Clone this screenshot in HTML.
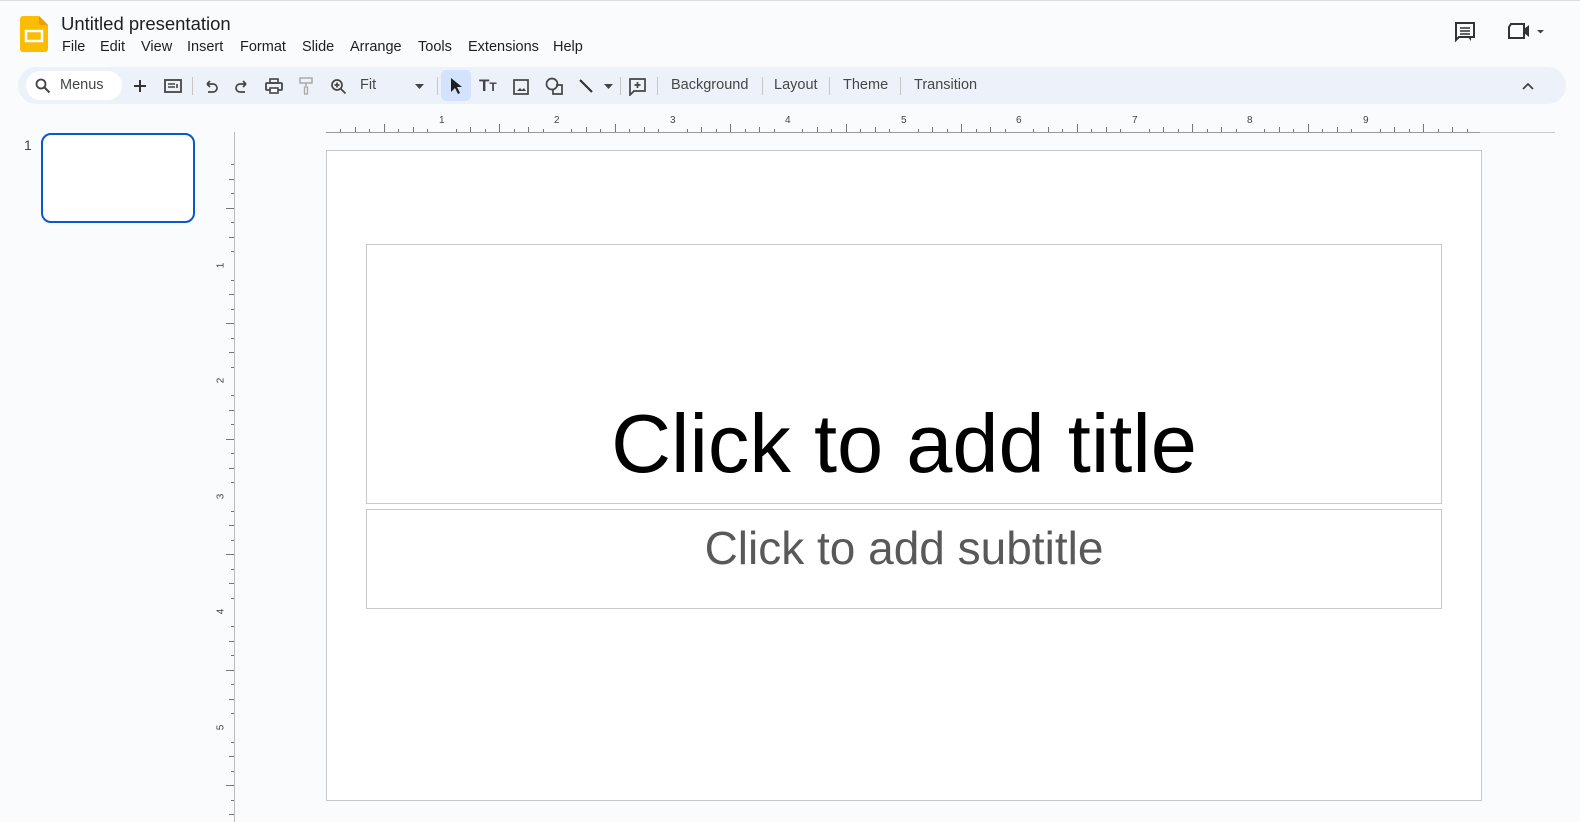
<!DOCTYPE html>
<html><head><meta charset="utf-8"><style>
*{margin:0;padding:0;box-sizing:border-box}
body{width:1580px;height:820px;background:#f9fbfd;font-family:"Liberation Sans",Arial,sans-serif;position:relative;overflow:hidden;color:#1f1f1f}
.abs{position:absolute}
.menu span{position:absolute;top:0;white-space:nowrap}
.tb{position:absolute;left:18px;top:67px;width:1548px;height:37px;background:#edf2fa;border-radius:19px}
.sep{position:absolute;top:77px;width:1px;height:18px;background:#c7c7c7}
.btn{position:absolute;top:77px;font-size:14.5px;color:#444746}
.tick{position:absolute;background:#777}
</style></head><body>
<div class="abs" style="left:0;top:0;width:1580px;height:1px;background:#ddd"></div>
<svg class="abs" style="left:20px;top:16px" width="28" height="36" viewBox="0 0 28 36"><path d="M3 0h16l9 9v24a3 3 0 0 1-3 3H3a3 3 0 0 1-3-3V3a3 3 0 0 1 3-3z" fill="#fbbc04"/><path d="M19 0l9 9h-7a2 2 0 0 1-2-2z" fill="#f29900"/><rect x="6" y="15" width="16" height="10" fill="none" stroke="#fff" stroke-width="2.5"/></svg>
<div class="abs" style="left:61px;top:13px;font-size:18.5px;color:#1f1f1f">Untitled presentation</div>
<div class="abs menu" style="left:0;top:39px;font-size:14.5px"><span style="left:62px">File</span><span style="left:100px">Edit</span><span style="left:141px">View</span><span style="left:187px">Insert</span><span style="left:240px">Format</span><span style="left:302px">Slide</span><span style="left:350px">Arrange</span><span style="left:418px">Tools</span><span style="left:468px">Extensions</span><span style="left:553px">Help</span></div>
<svg class="abs" style="left:1454px;top:21px" width="22" height="22" viewBox="0 0 22 22"><path d="M2 2h18v14H5l-3 3z" fill="none" stroke="#333" stroke-width="2"/><path d="M6 7h10M6 10h10M6 13h10" stroke="#333" stroke-width="1.6"/><path d="M17 16v4l-3-4z" fill="#333"/></svg>
<svg class="abs" style="left:1506px;top:21px" width="40" height="20" viewBox="0 0 40 20"><path d="M5 3h13v14H3V6z" fill="none" stroke="#333" stroke-width="2"/><path d="M18 8l5-4v12l-5-4z" fill="#333"/><path d="M31 9h7l-3.5 3.5z" fill="#444"/></svg>
<div class="tb"></div>
<div class="abs" style="left:26px;top:71px;width:96px;height:29px;background:#fff;border-radius:15px"></div>
<svg class="abs" style="left:35px;top:78px" width="16" height="16" viewBox="0 0 16 16"><circle cx="6" cy="6" r="4.5" fill="none" stroke="#444" stroke-width="1.8"/><path d="M9.5 9.5l5 5" stroke="#444" stroke-width="2"/></svg>
<div class="btn" style="left:60px">Menus</div>
<svg class="abs" style="left:132px;top:78px" width="16" height="16" viewBox="0 0 16 16"><path d="M8 2v12M2 8h12" stroke="#333" stroke-width="2"/></svg>
<svg class="abs" style="left:164px;top:79px" width="18" height="14" viewBox="0 0 18 14"><rect x="1" y="1" width="16" height="12" fill="none" stroke="#444" stroke-width="1.8"/><path d="M4 5h7M4 8h7M13 5v4" stroke="#444" stroke-width="1.6"/></svg>
<div class="sep" style="left:192px"></div>
<svg class="abs" style="left:203px;top:79px" width="16" height="16" viewBox="0 0 16 16"><path d="M4 5h6a4 4 0 0 1 0 8H5M4 5l3-3M4 5l3 3" fill="none" stroke="#444" stroke-width="1.7"/></svg>
<svg class="abs" style="left:234px;top:79px" width="16" height="16" viewBox="0 0 16 16"><path d="M12 5H6a4 4 0 0 0 0 8h5M12 5L9 2M12 5L9 8" fill="none" stroke="#444" stroke-width="1.7"/></svg>
<svg class="abs" style="left:265px;top:78px" width="18" height="17" viewBox="0 0 18 17"><rect x="5" y="1" width="8" height="4" fill="none" stroke="#444" stroke-width="1.6"/><rect x="1" y="5" width="16" height="7" rx="1" fill="none" stroke="#444" stroke-width="1.8"/><rect x="5" y="10" width="8" height="5" fill="#fff" stroke="#444" stroke-width="1.6"/></svg>
<svg class="abs" style="left:298px;top:77px" width="16" height="18" viewBox="0 0 16 18"><rect x="2" y="1" width="12" height="5" fill="none" stroke="#aaa" stroke-width="1.5"/><path d="M8 6v3" stroke="#aaa" stroke-width="1.5"/><rect x="6.5" y="10" width="3" height="7" fill="none" stroke="#aaa" stroke-width="1.3"/></svg>
<svg class="abs" style="left:330px;top:78px" width="17" height="17" viewBox="0 0 17 17"><circle cx="7" cy="7" r="5" fill="none" stroke="#444" stroke-width="1.7"/><path d="M10.5 10.5l5 5M7 4.5v5M4.5 7h5" stroke="#444" stroke-width="1.7"/></svg>
<div class="btn" style="left:360px">Fit</div>
<svg class="abs" style="left:415px;top:84px" width="9" height="5"><path d="M0 0h9L4.5 5z" fill="#444"/></svg>
<div class="sep" style="left:437px"></div>
<div class="abs" style="left:441px;top:70px;width:30px;height:31px;background:#d3e3fd;border-radius:5px"></div>
<svg class="abs" style="left:449px;top:77px" width="14" height="18" viewBox="0 0 14 18"><path d="M2 1v14l4-4 3 6 2-1-3-6h5z" fill="#1f1f1f"/></svg>
<div class="abs" style="left:479px;top:76px;font-size:17px;font-weight:bold;color:#444">T<span style="font-size:12px">T</span></div>
<svg class="abs" style="left:513px;top:79px" width="16" height="16" viewBox="0 0 16 16"><rect x="1" y="1" width="14" height="14" fill="none" stroke="#444" stroke-width="1.7"/><path d="M4 12l3-3 2 2 2-2 2 3z" fill="#444"/></svg>
<svg class="abs" style="left:545px;top:77px" width="19" height="19" viewBox="0 0 19 19"><circle cx="7" cy="7" r="5.5" fill="none" stroke="#444" stroke-width="1.7"/><path d="M11 8h6v9H8v-5" fill="none" stroke="#444" stroke-width="1.7"/></svg>
<svg class="abs" style="left:578px;top:78px" width="16" height="16" viewBox="0 0 16 16"><path d="M2 2l12 12" stroke="#333" stroke-width="2.2"/></svg>
<svg class="abs" style="left:604px;top:84px" width="9" height="5"><path d="M0 0h9L4.5 5z" fill="#444"/></svg>
<div class="sep" style="left:620px"></div>
<svg class="abs" style="left:628px;top:77px" width="19" height="19" viewBox="0 0 19 19"><path d="M2 2h15v12H6l-4 4z" fill="none" stroke="#444" stroke-width="1.7"/><path d="M9.5 5v6M6.5 8h6" stroke="#444" stroke-width="1.7"/></svg>
<div class="sep" style="left:657px"></div>
<div class="btn" style="left:671px">Background</div>
<div class="sep" style="left:762px"></div>
<div class="btn" style="left:774px">Layout</div>
<div class="sep" style="left:829px"></div>
<div class="btn" style="left:843px">Theme</div>
<div class="sep" style="left:900px"></div>
<div class="btn" style="left:914px">Transition</div>
<svg class="abs" style="left:1522px;top:82px" width="12" height="8" viewBox="0 0 12 8"><path d="M1 7l5-5 5 5" fill="none" stroke="#444" stroke-width="1.8"/></svg>
<div class="abs" style="left:24px;top:137px;font-size:14px;color:#444">1</div>
<div class="abs" style="left:41px;top:133px;width:154px;height:90px;border:2.5px solid #0b57d0;border-radius:10px;background:#fff"></div>
<div class="abs" style="left:234px;top:132px;width:1px;height:690px;background:#bbb"></div>
<div class="abs" style="left:326px;top:132px;width:1154px;height:1px;background:#999"></div>
<div class="abs" style="left:1480px;top:132px;width:75px;height:1px;background:#ccc"></div>
<div id="hr"></div>
<div class="abs" style="left:326px;top:150px;width:1156px;height:651px;background:#fff;border:1px solid #c8c8c8"></div>
<div class="abs" style="left:366px;top:244px;width:1076px;height:260px;border:1px solid #c8c8c8"></div>
<div class="abs" style="left:366px;top:509px;width:1076px;height:100px;border:1px solid #c8c8c8"></div>
<div class="abs" style="left:366px;top:396px;width:1076px;text-align:center;font-size:83px;line-height:96px;color:#000">Click to add title</div>
<div class="abs" style="left:366px;top:520px;width:1076px;text-align:center;font-size:46px;line-height:56px;color:#595959">Click to add subtitle</div>
<script>
var h='',p=115.5;
for(var i=0;i<80;i++){var x=326+i*p/8;if(x>1481)break;var t=i%8==0?0:(i%4==0?8:(i%2==0?5:3));
if(i%8!=0)h+='<div class="tick" style="left:'+Math.round(x)+'px;top:'+(132-t)+'px;width:1px;height:'+t+'px"></div>';
else if(i>0)h+='<div class="abs" style="left:'+(Math.round(x)-3)+'px;top:115px;font-size:10px;color:#444">'+(i/8)+'</div>';}
for(var i=0;i<80;i++){var y=150+i*p/8;if(y>820)break;var t=i%8==0?0:(i%4==0?8:(i%2==0?5:3));
if(i%8!=0)h+='<div class="tick" style="top:'+Math.round(y)+'px;left:'+(234-t)+'px;height:1px;width:'+t+'px"></div>';
else if(i>0)h+='<div class="abs" style="top:'+(Math.round(y)-6)+'px;left:218px;font-size:10px;color:#444;transform:rotate(-90deg)">'+(i/8)+'</div>';}
document.getElementById('hr').innerHTML=h;
</script>
</body></html>
